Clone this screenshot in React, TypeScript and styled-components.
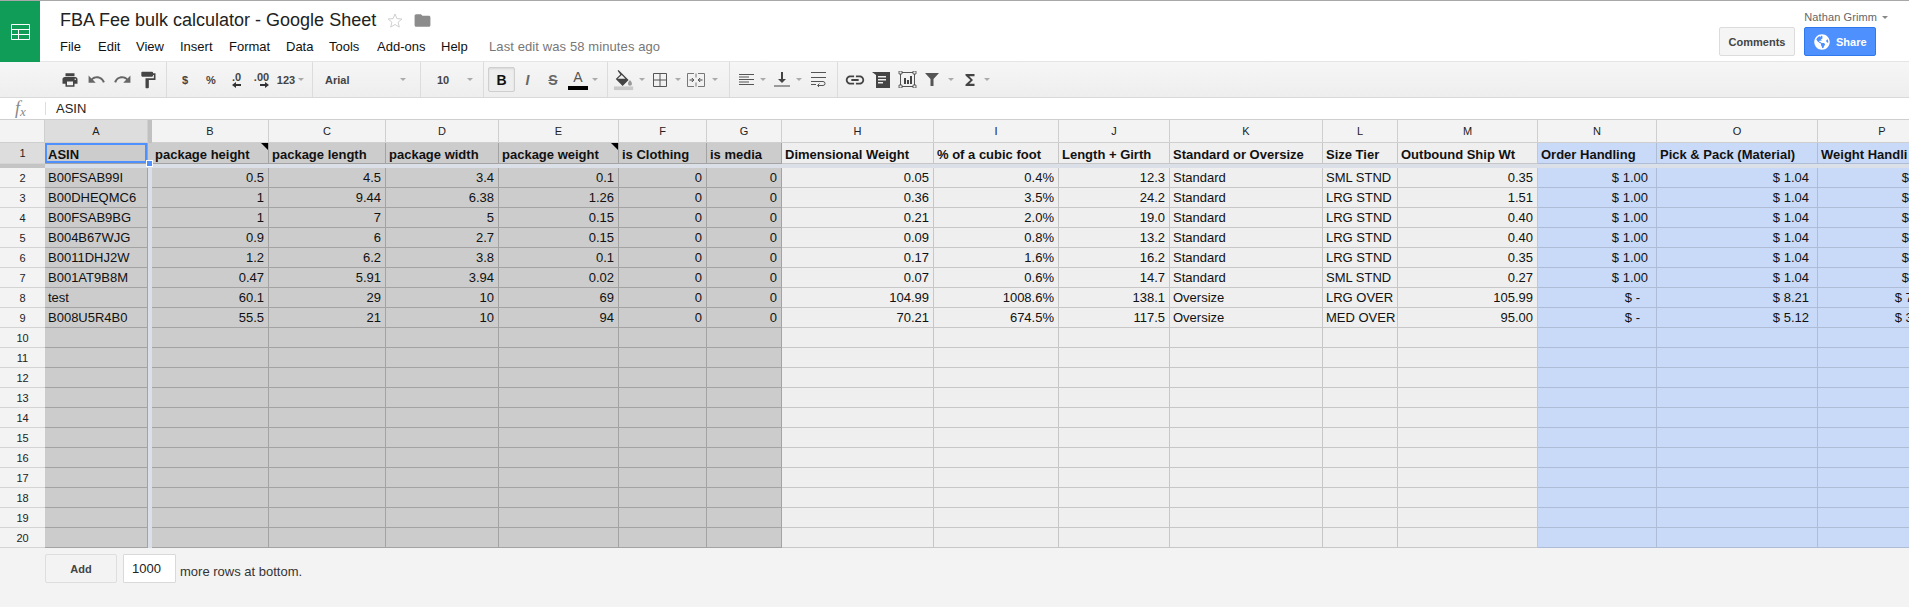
import React from "react";
import styled, { createGlobalStyle } from "styled-components";
import { FaGlobeAmericas } from "react-icons/fa";
import { MdFolder, MdFormatPaint, MdFunctions, MdLink, MdPrint, MdRedo, MdUndo } from "react-icons/md";

const GlobalStyle = createGlobalStyle`
  html, body {
    margin: 0;
    height: 100%;
    overflow: hidden;
    background: #f3f3f3;
  }
  * {
    box-sizing: border-box;
  }
  body {
    font-family: "Liberation Sans", Arial, sans-serif;
    color: #222;
  }
`;

const Page = styled.div`
  display: flex;
  flex-direction: column;
  height: 607px;
  width: 1909px;
  overflow: hidden;
`;

/* ---------- top header ---------- */

const Header = styled.header`
  display: flex;
  height: 62px;
  flex: none;
  background: #fff;
  border-top: 1px solid #a8a8a8;
  border-bottom: 1px solid #e5e5e5;
`;

const LogoBox = styled.div`
  width: 40px;
  background: #0f9d58;
  display: flex;
  align-items: center;
  justify-content: center;
  margin-bottom: -1px;
`;

const DocInfo = styled.div`
  display: flex;
  flex-direction: column;
  padding: 8px 0 0 20px;
`;

const TitleRow = styled.div`
  display: flex;
  align-items: center;
  height: 22px;
`;

const Title = styled.div`
  font-size: 18px;
  color: #222;
  line-height: 22px;
`;

const FolderWrap = styled.span`
  display: flex;
  margin-left: 10px;
  color: #8c8c8c;
`;

const StarWrap = styled.span`
  display: flex;
  margin-left: 11px;
`;

const MenuRow = styled.nav`
  display: flex;
  align-items: center;
  margin-top: 5px;
  height: 20px;
`;

const MenuItem = styled.span<{ $w: number }>`
  width: ${(p) => p.$w}px;
  font-size: 13px;
  color: #111;
`;

const LastEdit = styled.span`
  font-size: 13px;
  letter-spacing: 0.1px;
  color: #777;
`;

const HeaderRight = styled.div`
  margin-left: auto;
  display: flex;
  flex-direction: column;
  align-items: flex-end;
  padding: 10px 21px 0 0;
`;

const UserRow = styled.div`
  display: flex;
  align-items: center;
  gap: 5px;
  font-size: 11px;
  letter-spacing: 0.1px;
  color: #666;
  line-height: 13px;
`;

const ButtonRow = styled.div`
  display: flex;
  gap: 9px;
  margin: 3px 12px 0 0;
`;

const CommentsButton = styled.button`
  width: 76px;
  height: 29px;
  padding: 0;
  font: bold 11px "Liberation Sans", Arial, sans-serif;
  color: #444;
  background: #f5f5f5;
  border: 1px solid #dcdcdc;
  border-radius: 2px;
`;

const ShareButton = styled.button`
  width: 72px;
  height: 29px;
  padding: 0 0 0 9px;
  display: flex;
  align-items: center;
  gap: 6px;
  font: bold 11px "Liberation Sans", Arial, sans-serif;
  color: #fff;
  background: #4d90fe;
  border: 1px solid #3079ed;
  border-radius: 2px;
`;

const Caret = styled.span<{ $dark?: boolean }>`
  display: inline-block;
  width: 0;
  height: 0;
  border-left: 3px solid transparent;
  border-right: 3px solid transparent;
  border-top: 3px solid ${(p) => (p.$dark ? "#888" : "#aaa")};
`;

/* ---------- toolbar ---------- */

const Toolbar = styled.div`
  display: flex;
  height: 36px;
  flex: none;
  background: linear-gradient(#f6f6f6, #eeeeee);
  border-bottom: 1px solid #d9d9d9;
`;

const ToolGroup = styled.div<{ $w?: number; $left?: number; $right?: number; $between?: boolean }>`
  display: flex;
  align-items: center;
  width: ${(p) => (p.$w ? `${p.$w}px` : "auto")};
  padding-left: ${(p) => p.$left ?? 4}px;
  padding-right: ${(p) => p.$right ?? 0}px;
  justify-content: ${(p) => (p.$between ? "space-between" : "flex-start")};
  border-right: 1px solid #dcdcdc;
  &:last-child {
    border-right: 0;
  }
`;

const ToolButton = styled.div<{ $w: number; $active?: boolean; $soft?: boolean }>`
  width: ${(p) => p.$w}px;
  height: 25px;
  flex: none;
  display: flex;
  align-items: center;
  justify-content: center;
  color: ${(p) => (p.$soft ? "#666" : "#444")};
  font-size: 11px;
  font-weight: bold;
  border: 1px solid ${(p) => (p.$active ? "#cfcfcf" : "transparent")};
  border-radius: 2px;
  background: ${(p) => (p.$active ? "#eeeeee" : "transparent")};
  box-shadow: ${(p) => (p.$active ? "inset 0 1px 2px rgba(0,0,0,.1)" : "none")};
`;

const CaretSlot = styled.div<{ $w: number }>`
  width: ${(p) => p.$w}px;
  flex: none;
  display: flex;
  justify-content: center;
`;

const SelectText = styled.span`
  font-size: 11px;
  font-weight: bold;
  color: #444;
`;

const FormatLetter = styled.span<{ $italic?: boolean; $strike?: boolean; $black?: boolean }>`
  font-size: 14px;
  font-weight: bold;
  font-style: ${(p) => (p.$italic ? "italic" : "normal")};
  text-decoration: ${(p) => (p.$strike ? "line-through" : "none")};
  color: ${(p) => (p.$black ? "#111" : "#666")};
`;

const TextColor = styled.span`
  display: flex;
  flex-direction: column;
  align-items: center;
  font-size: 14px;
  font-weight: normal;
  line-height: 15px;
  color: #555;
  &::after {
    content: "";
    width: 20px;
    height: 4px;
    margin-top: 1px;
    background: #000;
  }
`;

const DecimalLabel = styled.span`
  display: flex;
  flex-direction: column;
  align-items: flex-end;
  line-height: 10px;
`;

/* ---------- formula bar ---------- */

const FormulaBar = styled.div`
  display: flex;
  align-items: center;
  height: 22px;
  flex: none;
  background: #fff;
  border-bottom: 1px solid #cfcfcf;
`;

const FxLabel = styled.div`
  width: 46px;
  padding-left: 15px;
  font: italic 18px "Liberation Serif", serif;
  color: #888;
  border-right: 1px solid #ddd;
  height: 13px;
  line-height: 13px;
  sub {
    font-size: 13px;
    vertical-align: -2px;
    line-height: 0;
  }
`;

const FormulaText = styled.div`
  padding: 0 0 1px 10px;
  font-size: 13px;
  color: #222;
`;

/* ---------- grid ---------- */

const GridWrap = styled.div`
  flex: none;
  height: 428px;
  overflow: hidden;
`;

const Sheet = styled.table`
  table-layout: fixed;
  width: 1947px;
  border-collapse: separate;
  border-spacing: 0;
  font-size: 13px;
`;

const ColHead = styled.th<{ $selected?: boolean }>`
  height: 23px;
  padding: 0;
  font-size: 11px;
  font-weight: normal;
  color: #222;
  text-align: center;
  background: ${(p) => (p.$selected ? "#dddddd" : "#f3f3f3")};
  border-right: 1px solid #cfcfcf;
  border-bottom: 1px solid #cfcfcf;
`;

const RowHead = styled.th<{ $selected?: boolean }>`
  height: 20px;
  padding: 0;
  font-size: 11px;
  font-weight: normal;
  color: #222;
  text-align: center;
  background: ${(p) => (p.$selected ? "#dddddd" : "#f3f3f3")};
  border-bottom: 1px solid #d4d4d4;
`;

const FreezeCol = styled.td<{ $shade: "top" | "head" | "body" }>`
  padding: 0;
  background: ${(p) => (p.$shade === "top" ? "#c0c0c0" : p.$shade === "head" ? "#cccccc" : "#dadfe8")};
`;

const FreezeRow = styled.td<{ $corner?: boolean }>`
  height: 4px;
  padding: 0;
  font-size: 0;
  line-height: 0;
  background: ${(p) => (p.$corner ? "#c4c4c4" : "#dadfe8")};
`;

const tones = {
  gray: { bg: "#cccccc", line: "#a3a3a3" },
  light: { bg: "#efefef", line: "#c7c7c7" },
  blue: { bg: "#c9daf8", line: "#aebcd6" },
};

type Tone = keyof typeof tones;

const Cell = styled.td<{ $tone: Tone; $head?: boolean; $numeric?: boolean; $pad?: number }>`
  position: relative;
  height: ${(p) => (p.$head ? 21 : 20)}px;
  padding: ${(p) => (p.$head ? "3px" : "0")} ${(p) => p.$pad ?? 3}px 0 3px;
  line-height: ${(p) => (p.$head ? 17 : 19)}px;
  font-weight: ${(p) => (p.$head ? "bold" : "normal")};
  text-align: ${(p) => (p.$numeric ? "right" : "left")};
  white-space: nowrap;
  overflow: hidden;
  color: #111;
  background: ${(p) => tones[p.$tone].bg};
  border-right: 1px solid ${(p) => tones[p.$tone].line};
  border-bottom: 1px solid ${(p) => tones[p.$tone].line};
`;

const ActiveCell = styled(Cell)`
  overflow: visible;
`;

const Selection = styled.div`
  position: absolute;
  inset: 0 0 0 0;
  border: 2px solid #4d90fe;
  pointer-events: none;
`;

const FillHandle = styled.div`
  position: absolute;
  right: -6px;
  bottom: -4px;
  width: 7px;
  height: 7px;
  background: #4d90fe;
  border: 1px solid #fff;
  z-index: 2;
`;

const NoteMark = styled.span`
  position: absolute;
  top: 0;
  right: 0;
  width: 0;
  height: 0;
  border-top: 7px solid #000;
  border-left: 7px solid transparent;
`;

/* ---------- footer ---------- */

const Footer = styled.div`
  flex: 1;
  display: flex;
  align-items: flex-start;
  padding: 6px 0 0 45px;
  background: #f3f3f3;
`;

const AddButton = styled.button`
  width: 72px;
  height: 29px;
  padding: 0;
  font: bold 11px "Liberation Sans", Arial, sans-serif;
  color: #444;
  background: #f3f3f3;
  border: 1px solid #dedede;
  border-radius: 2px;
`;

const RowsInput = styled.input`
  width: 53px;
  height: 29px;
  margin-left: 6px;
  padding: 0 0 0 8px;
  font: 13px "Liberation Sans", Arial, sans-serif;
  color: #222;
  background: #fff;
  border: 1px solid #d9d9d9;
  border-radius: 1px;
`;

const FooterNote = styled.span`
  margin: 10px 0 0 4px;
  font-size: 13px;
  color: #333;
`;

/* ---------- drawings ---------- */

const SheetLogo = () => (
  <svg width="19" height="16" viewBox="0 0 19 16" fill="none" stroke="#fff" strokeWidth="1">
    <path d="M.5.5h18v15H.5zM.5 5.500h18M.5 10.500h18M7.500 5.500v10" />
  </svg>
);

const StarOutline = () => (
  <svg width="16" height="15" viewBox="0 0 16 15" fill="none" stroke="#cfcfcf">
    <path d="M8 1l1.900 4.600 5 .4-3.800 3.200 1.200 4.900L8 11.500l-4.300 2.600 1.200-4.900L1.100 6l5-.4z" />
  </svg>
);

const SmallArrow = ({ flip }: { flip?: boolean }) => (
  <svg width="9" height="6" viewBox="0 0 9 6" fill="#333" style={flip ? { transform: "scaleX(-1)" } : undefined}>
    <path d="M0 3l4-3v2h5v2H4v2z" />
  </svg>
);

const FillIcon = () => (
  <svg width="24" height="22" viewBox="0 0 24 22">
    <path d="M5 1l1-1 5 5 6 6-6.500 6.500L3 10l5-5z" fill="#444" />
    <path d="M5 9.500l4.500-4 4 4z" fill="#f1f1f1" />
    <path d="M18.500 11s-2.200 2.600-2.200 4a2.200 2.200 0 0 0 4.400 0c0-1.400-2.200-4-2.200-4z" fill="#999" />
    <rect x="1" y="18" width="21" height="4" fill="#c9c9c9" />
  </svg>
);

const BordersIcon = () => (
  <svg width="16" height="16" viewBox="0 0 16 16" fill="none" stroke="#555">
    <path d="M1.500 1.500h13v13h-13zM8 1.500v13M1.500 8h13" />
  </svg>
);

const MergeIcon = () => (
  <svg width="18" height="14" viewBox="0 0 18 14" fill="none" stroke="#777">
    <path d="M7 .5H.5v13H7M11 .5h6.500v13H11M9 .5v4M9 9.500v4" />
    <path d="M2.500 7H6.500M4.800 5l2 2-2 2M15.500 7h-4M13.200 5l-2 2 2 2" stroke="#444" />
  </svg>
);

const AlignIcon = () => (
  <svg width="15" height="12" viewBox="0 0 15 12" fill="#555">
    <path d="M0 0h15v1H0zM0 2.500h10v1H0zM0 5h15v1H0zM0 7.500h10v1H0zM0 10h15v1H0z" />
  </svg>
);

const VAlignIcon = () => (
  <svg width="16" height="15" viewBox="0 0 16 15" fill="#444">
    <path d="M7 0h2v7h3l-4 4-4-4h3zM0 13.500h16v1H0z" />
  </svg>
);

const WrapIcon = () => (
  <svg width="15" height="15" viewBox="0 0 15 15" fill="none" stroke="#555">
    <path d="M0 .5h15M0 5.500h15M0 12.500h5M0 9.500h12a2 2 0 0 1 0 4H7" />
    <path d="M8.500 11.500l-2 2 2 2" />
  </svg>
);

const CommentIcon = () => (
  <svg width="18" height="16" viewBox="0 0 18 16">
    <path d="M0 0h18v16H4V3z" fill="#444" />
    <path d="M6 4h8v1.500H6zM6 7h8v1.500H6zM6 10h5v1.500H6z" fill="#eee" />
  </svg>
);

const ChartIcon = () => (
  <svg width="19" height="17" viewBox="0 0 19 17">
    <path d="M2.500 1.500h14v14h-14z" fill="none" stroke="#555" />
    <path d="M1 0h3v3H1zM15 0h3v3h-3zM1 14h3v3H1zM15 14h3v3h-3z" fill="#eee" stroke="#444" strokeWidth=".8" />
    <path d="M6 7h2v6H6zM9 9h2v4H9zM12 5h2v8h-2z" fill="#444" />
  </svg>
);

const FilterIcon = () => (
  <svg width="14" height="13" viewBox="0 0 14 13" fill="#555">
    <path d="M0 0h14L8.500 6v7h-3V6z" />
  </svg>
);

/* ---------- data ---------- */

const menuItems: [string, number][] = [
  ["File", 38],
  ["Edit", 38],
  ["View", 44],
  ["Insert", 49],
  ["Format", 57],
  ["Data", 43],
  ["Tools", 48],
  ["Add-ons", 64],
  ["Help", 48],
];

const columns: { letter: string; width: number; tone: Tone; title: string; note?: boolean }[] = [
  { letter: "B", width: 117, tone: "gray", title: "package height", note: true },
  { letter: "C", width: 117, tone: "gray", title: "package length" },
  { letter: "D", width: 113, tone: "gray", title: "package width" },
  { letter: "E", width: 120, tone: "gray", title: "package weight", note: true },
  { letter: "F", width: 88, tone: "gray", title: "is Clothing" },
  { letter: "G", width: 75, tone: "gray", title: "is media" },
  { letter: "H", width: 152, tone: "light", title: "Dimensional Weight" },
  { letter: "I", width: 125, tone: "light", title: "% of a cubic foot" },
  { letter: "J", width: 111, tone: "light", title: "Length + Girth" },
  { letter: "K", width: 153, tone: "light", title: "Standard or Oversize" },
  { letter: "L", width: 75, tone: "light", title: "Size Tier" },
  { letter: "M", width: 140, tone: "light", title: "Outbound Ship Wt" },
  { letter: "N", width: 119, tone: "blue", title: "Order Handling" },
  { letter: "O", width: 161, tone: "blue", title: "Pick & Pack (Material)" },
  { letter: "P", width: 129, tone: "blue", title: "Weight Handli" },
];

const rows: string[][] = [
  ["B00FSAB99I", "0.5", "4.5", "3.4", "0.1", "0", "0", "0.05", "0.4%", "12.3", "Standard", "SML STND", "0.35", "$ 1.00", "$ 1.04", "$ 0.46"],
  ["B00DHEQMC6", "1", "9.44", "6.38", "1.26", "0", "0", "0.36", "3.5%", "24.2", "Standard", "LRG STND", "1.51", "$ 1.00", "$ 1.04", "$ 0.98"],
  ["B00FSAB9BG", "1", "7", "5", "0.15", "0", "0", "0.21", "2.0%", "19.0", "Standard", "LRG STND", "0.40", "$ 1.00", "$ 1.04", "$ 0.46"],
  ["B004B67WJG", "0.9", "6", "2.7", "0.15", "0", "0", "0.09", "0.8%", "13.2", "Standard", "LRG STND", "0.40", "$ 1.00", "$ 1.04", "$ 0.46"],
  ["B0011DHJ2W", "1.2", "6.2", "3.8", "0.1", "0", "0", "0.17", "1.6%", "16.2", "Standard", "LRG STND", "0.35", "$ 1.00", "$ 1.04", "$ 0.46"],
  ["B001AT9B8M", "0.47", "5.91", "3.94", "0.02", "0", "0", "0.07", "0.6%", "14.7", "Standard", "SML STND", "0.27", "$ 1.00", "$ 1.04", "$ 0.46"],
  ["test", "60.1", "29", "10", "69", "0", "0", "104.99", "1008.6%", "138.1", "Oversize", "LRG OVER", "105.99", "$ -", "$ 8.21", "$ 72.33"],
  ["B008U5R4B0", "55.5", "21", "10", "94", "0", "0", "70.21", "674.5%", "117.5", "Oversize", "MED OVER", "95.00", "$ -", "$ 5.12", "$ 38.00"],
];

const emptyRows = Array.from({ length: 11 }, (_, i) => i + 10);

const isLeftAligned = (letter: string) => letter === "K" || letter === "L";

const moneyPad = (value: string) => {
  if (value === "$ -") return 16;
  return value.startsWith("$") ? 8 : 4;
};

export default function App() {
  return (
    <Page>
      <GlobalStyle />
      <Header>
        <LogoBox>
          <SheetLogo />
        </LogoBox>
        <DocInfo>
          <TitleRow>
            <Title>FBA Fee bulk calculator - Google Sheet</Title>
            <StarWrap>
              <StarOutline />
            </StarWrap>
            <FolderWrap>
              <MdFolder size={19} />
            </FolderWrap>
          </TitleRow>
          <MenuRow>
            {menuItems.map(([label, width]) => (
              <MenuItem key={label} $w={width}>
                {label}
              </MenuItem>
            ))}
            <LastEdit>Last edit was 58 minutes ago</LastEdit>
          </MenuRow>
        </DocInfo>
        <HeaderRight>
          <UserRow>
            Nathan Grimm <Caret $dark />
          </UserRow>
          <ButtonRow>
            <CommentsButton>Comments</CommentsButton>
            <ShareButton>
              <FaGlobeAmericas size={16} />
              Share
            </ShareButton>
          </ButtonRow>
        </HeaderRight>
      </Header>

      <Toolbar>
        <ToolGroup $w={167} $left={57}>
          <ToolButton $w={26}><MdPrint size={18} /></ToolButton>
          <ToolButton $w={26} $soft><MdUndo size={19} /></ToolButton>
          <ToolButton $w={26} $soft><MdRedo size={19} /></ToolButton>
          <ToolButton $w={26}><MdFormatPaint size={20} /></ToolButton>
        </ToolGroup>
        <ToolGroup $w={146} $left={5}>
          <ToolButton $w={26}>$</ToolButton>
          <ToolButton $w={26}>%</ToolButton>
          <ToolButton $w={25}>
            <DecimalLabel>.0<SmallArrow /></DecimalLabel>
          </ToolButton>
          <ToolButton $w={25}>
            <DecimalLabel>.00<SmallArrow flip /></DecimalLabel>
          </ToolButton>
          <ToolButton $w={24}>123</ToolButton>
          <CaretSlot $w={6}><Caret /></CaretSlot>
        </ToolGroup>
        <ToolGroup $w={108} $left={12} $right={14} $between>
          <SelectText>Arial</SelectText>
          <Caret />
        </ToolGroup>
        <ToolGroup $w={63} $left={16} $right={10} $between>
          <SelectText>10</SelectText>
          <Caret />
        </ToolGroup>
        <ToolGroup $w={124}>
          <ToolButton $w={27} $active><FormatLetter $black>B</FormatLetter></ToolButton>
          <ToolButton $w={25}><FormatLetter $italic>I</FormatLetter></ToolButton>
          <ToolButton $w={26}><FormatLetter $strike>S</FormatLetter></ToolButton>
          <ToolButton $w={24}><TextColor>A</TextColor></ToolButton>
          <CaretSlot $w={10}><Caret /></CaretSlot>
        </ToolGroup>
        <ToolGroup $w={122}>
          <ToolButton $w={24}><FillIcon /></ToolButton>
          <CaretSlot $w={11}><Caret /></CaretSlot>
          <ToolButton $w={26}><BordersIcon /></ToolButton>
          <CaretSlot $w={10}><Caret /></CaretSlot>
          <ToolButton $w={26}><MergeIcon /></ToolButton>
          <CaretSlot $w={12}><Caret /></CaretSlot>
        </ToolGroup>
        <ToolGroup $w={108}>
          <ToolButton $w={24}><AlignIcon /></ToolButton>
          <CaretSlot $w={10}><Caret /></CaretSlot>
          <ToolButton $w={28}><VAlignIcon /></ToolButton>
          <CaretSlot $w={6}><Caret /></CaretSlot>
          <ToolButton $w={32}><WrapIcon /></ToolButton>
        </ToolGroup>
        <ToolGroup>
          <ToolButton $w={26}><MdLink size={22} /></ToolButton>
          <ToolButton $w={26}><CommentIcon /></ToolButton>
          <ToolButton $w={27}><ChartIcon /></ToolButton>
          <ToolButton $w={22}><FilterIcon /></ToolButton>
          <CaretSlot $w={16}><Caret /></CaretSlot>
          <ToolButton $w={22}><MdFunctions size={18} /></ToolButton>
          <CaretSlot $w={12}><Caret /></CaretSlot>
        </ToolGroup>
      </Toolbar>

      <FormulaBar>
        <FxLabel>f<sub>x</sub></FxLabel>
        <FormulaText>ASIN</FormulaText>
      </FormulaBar>

      <GridWrap>
        <Sheet>
          <colgroup>
            <col width={45} />
            <col width={103} />
            <col width={4} />
            {columns.map((c) => (
              <col key={c.letter} width={c.width} />
            ))}
          </colgroup>
          <tbody>
            <tr>
              <ColHead />
              <ColHead $selected>A</ColHead>
              <FreezeCol $shade="top" />
              {columns.map((c) => (
                <ColHead key={c.letter}>{c.letter}</ColHead>
              ))}
            </tr>
            <tr>
              <RowHead $selected>1</RowHead>
              <ActiveCell $tone="gray" $head>
                ASIN
                <Selection />
                <FillHandle />
              </ActiveCell>
              <FreezeCol $shade="head" />
              {columns.map((c) => (
                <Cell key={c.letter} $tone={c.tone} $head>
                  {c.title}
                  {c.note && <NoteMark />}
                </Cell>
              ))}
            </tr>
            <tr>
              <FreezeRow $corner />
              <FreezeRow colSpan={columns.length + 2} />
            </tr>
            {rows.map((row, i) => (
              <tr key={row[0]}>
                <RowHead>{i + 2}</RowHead>
                <Cell $tone="gray">{row[0]}</Cell>
                <FreezeCol $shade="body" />
                {columns.map((c, j) => {
                  const value = row[j + 1];
                  const left = isLeftAligned(c.letter);
                  return (
                    <Cell key={c.letter} $tone={c.tone} $numeric={!left} $pad={left ? 3 : moneyPad(value)}>
                      {value}
                    </Cell>
                  );
                })}
              </tr>
            ))}
            {emptyRows.map((n) => (
              <tr key={n}>
                <RowHead>{n}</RowHead>
                <Cell $tone="gray" />
                <FreezeCol $shade="body" />
                {columns.map((c) => (
                  <Cell key={c.letter} $tone={c.tone} />
                ))}
              </tr>
            ))}
          </tbody>
        </Sheet>
      </GridWrap>

      <Footer>
        <AddButton>Add</AddButton>
        <RowsInput defaultValue="1000" />
        <FooterNote>more rows at bottom.</FooterNote>
      </Footer>
    </Page>
  );
}
